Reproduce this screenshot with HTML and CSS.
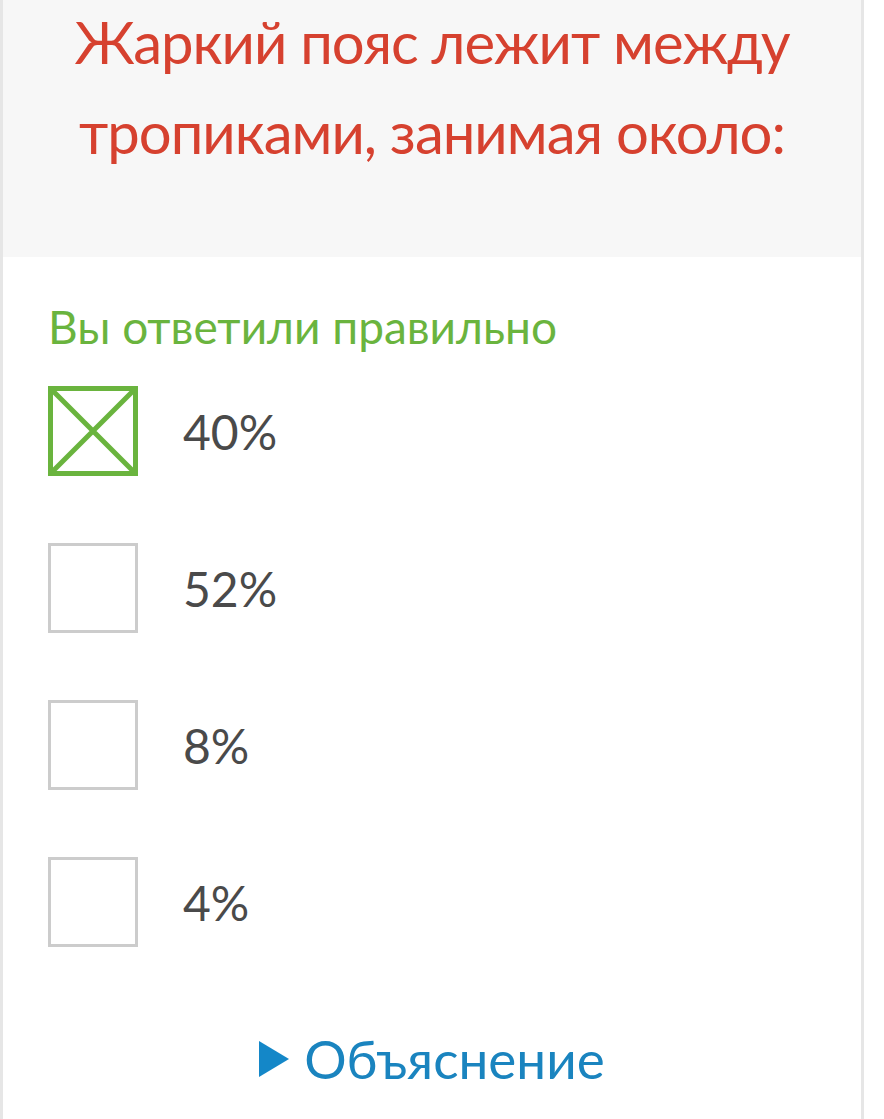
FILE: index.html
```html
<!DOCTYPE html>
<html lang="ru">
<head>
<meta charset="utf-8">
<link rel="stylesheet" href="styles.css">
</head>
<body>
<div class="card">
  <div class="question">
    <h1 class="title">Жаркий пояс лежит между тропиками, занимая около:</h1>
  </div>
  <div class="body">
    <div class="result">Вы ответили правильно</div>
    <ul class="options">
      <li class="option">
        <span class="box box-correct">
          <svg viewBox="0 0 90 90" width="90" height="90"><path d="M5 5 L85 85 M85 5 L5 85" stroke="#6ab43e" stroke-width="5" fill="none"/></svg>
        </span>
        <span class="label">40%</span>
      </li>
      <li class="option"><span class="box"></span><span class="label">52%</span></li>
      <li class="option"><span class="box"></span><span class="label">8%</span></li>
      <li class="option"><span class="box"></span><span class="label">4%</span></li>
    </ul>
    <div class="explain">
      <span class="tri"></span><span class="explain-text">Объяснение</span>
    </div>
  </div>
</div>
</body>
</html>
```

FILE: styles.css
```css
html, body {
  margin: 0;
  padding: 0;
  background: #ffffff;
}
body {
  font-family: "Lato", "Open Sans", sans-serif;
  width: 884px;
  height: 1119px;
  overflow: hidden;
}
.card {
  width: 858px;
  height: 1119px;
  border-left: 3px solid #e6e6e6;
  border-right: 3px solid #e6e6e6;
  box-sizing: content-box;
}
.question {
  background: #f7f7f7;
  height: 257px;
  padding-top: 0;
  box-sizing: border-box;
  overflow: hidden;
}
.title {
  margin: -3px 0 0;
  font-weight: 400;
  font-size: 58px;
  letter-spacing: -1px;
  line-height: 90px;
  color: #d6412f;
  text-align: center;
  padding: 0 30px;
}
.body {
  padding: 40px 0 0 45px;
}
.result {
  font-size: 46px;
  color: #6ab43e;
  line-height: 60px;
  margin-bottom: 29px;
}
.options {
  list-style: none;
  margin: 0;
  padding: 0;
  display: flex;
  flex-direction: column;
  gap: 67px;
}
.option {
  display: flex;
  align-items: center;
  height: 90px;
}
.box {
  width: 90px;
  height: 90px;
  box-sizing: border-box;
  border: 3px solid #cccccc;
  flex: none;
  position: relative;
}
.box-correct {
  border: 5px solid #6ab43e;
}
.box-correct svg {
  position: absolute;
  left: -5px;
  top: -5px;
}
.label {
  margin-left: 45px;
  font-size: 48px;
  color: #4a4a4a;
}
.explain {
  display: flex;
  align-items: center;
  justify-content: center;
  margin-top: 80px;
  margin-left: -45px;
  gap: 15px;
}
.tri {
  width: 0;
  height: 0;
  border-left: 30px solid #1487c8;
  border-top: 18px solid transparent;
  border-bottom: 18px solid transparent;
}
.explain-text {
  font-size: 53px;
  color: #1a84bf;
}
```
